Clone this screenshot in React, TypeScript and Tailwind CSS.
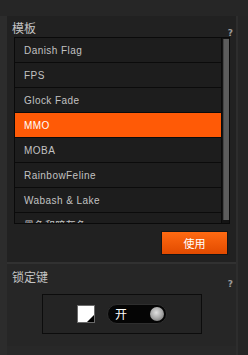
import React from "react";

const items = ["Danish Flag", "FPS", "Glock Fade", "MMO", "MOBA", "RainbowFeline", "Wabash & Lake", "黑色和暗灰色"];

function Help() {
  return (
    <span className="text-[9px] font-bold leading-none text-[#9a9a9a]" style={{ fontFamily: '"DejaVu Sans", sans-serif' }}>
      ?
    </span>
  );
}

export default function App() {
  return (
    <div
      className="w-[248px] h-[355px] bg-[#282828] flex flex-col overflow-hidden"
      style={{ fontFamily: '"Liberation Sans", "Noto Sans CJK SC", sans-serif' }}
    >
      <div className="h-[16px] bg-[#262626] shrink-0" />
      <div className="flex flex-1">
        <div className="w-[7px] bg-[#2c2c2c] shrink-0" />
        <div className="w-[229px] flex flex-col">
          {/* Section 1 */}
          <div className="bg-[#212121] h-[246px] flex flex-col">
            <div className="h-[21px] flex items-start justify-between pl-[5px] pr-[3px]">
              <span className="text-[12px] leading-none mt-[6px] text-[#c4c4c4]" style={{ fontFamily: '"Noto Sans CJK SC", sans-serif' }}>
                模板
              </span>
              <span className="mt-[3px]">
                <Help />
              </span>
            </div>
            <div className="ml-[7px] w-[216px] h-[187px] border border-[#0a0a0a] flex overflow-hidden">
              <div className="flex-1 flex flex-col overflow-hidden">
                {items.map((t) => {
                  const sel = t === "MMO";
                  return (
                    <div
                      key={t}
                      className={
                        "h-[25px] shrink-0 border-b border-[#0b0b0b] flex items-center pl-[9px] pt-[1px] text-[10px] tracking-[0.45px] " +
                        (sel ? "bg-[#ff5a06] text-white" : "bg-[#1d1d1d] text-[#c2c2c2]")
                      }
                    >
                      {t}
                    </div>
                  );
                })}
              </div>
              <div className="w-[8px] bg-[#141414] border-l border-[#0a0a0a] flex justify-center pt-[1px] pb-[2px]">
                <div className="w-[6px] h-[181px] bg-[#5c5c5c] border-l border-[#444]" />
              </div>
            </div>
            <div className="flex justify-end pr-[8px] mt-[7px]">
              <button
                className="w-[67px] h-[24px] border border-[#151515] bg-gradient-to-b from-[#ff6a12] to-[#e24a00] text-white text-[11px] flex items-center justify-center"
                style={{ fontFamily: '"Noto Sans CJK SC", sans-serif' }}
              >
                使用
              </button>
            </div>
          </div>
          <div className="h-[2px] bg-[#313131]" />
          {/* Section 2 */}
          <div className="bg-[#262626] h-[82px] flex flex-col">
            <div className="h-[30px] flex items-start justify-between pl-[5px] pr-[3px]">
              <span className="text-[12px] leading-none mt-[7px] text-[#c4c4c4]" style={{ fontFamily: '"Noto Sans CJK SC", sans-serif' }}>
                锁定键
              </span>
              <span className="mt-[6px]">
                <Help />
              </span>
            </div>
            <div className="ml-[35px] w-[160px] h-[40px] border border-[#0c0c0c] bg-[#242424] flex items-center justify-center gap-[12px]">
              <div className="relative w-[18px] h-[18px] bg-white border border-[#6a6a6a] overflow-hidden">
                <div
                  className="absolute right-0 bottom-0 w-[7px] h-[7px] bg-black"
                  style={{ clipPath: "polygon(100% 0, 100% 100%, 0 100%)" }}
                />
              </div>
              <div className="w-[60px] h-[20px] rounded-full bg-[#050505] border border-[#2e2e2e] flex items-center justify-between pl-[7px] pr-[2px]">
                <span className="text-white text-[12px] leading-none" style={{ fontFamily: '"Noto Sans CJK SC", sans-serif' }}>
                  开
                </span>
                <div
                  className="w-[14px] h-[14px] rounded-full"
                  style={{ background: "radial-gradient(circle at 45% 40%, #e0e0e0 0%, #a8a8a8 50%, #5e5e5e 100%)" }}
                />
              </div>
            </div>
          </div>
        </div>
        <div className="w-[12px] bg-[#252525] border-l-[2px] border-[#2d2d2d] shrink-0" />
      </div>
    </div>
  );
}
